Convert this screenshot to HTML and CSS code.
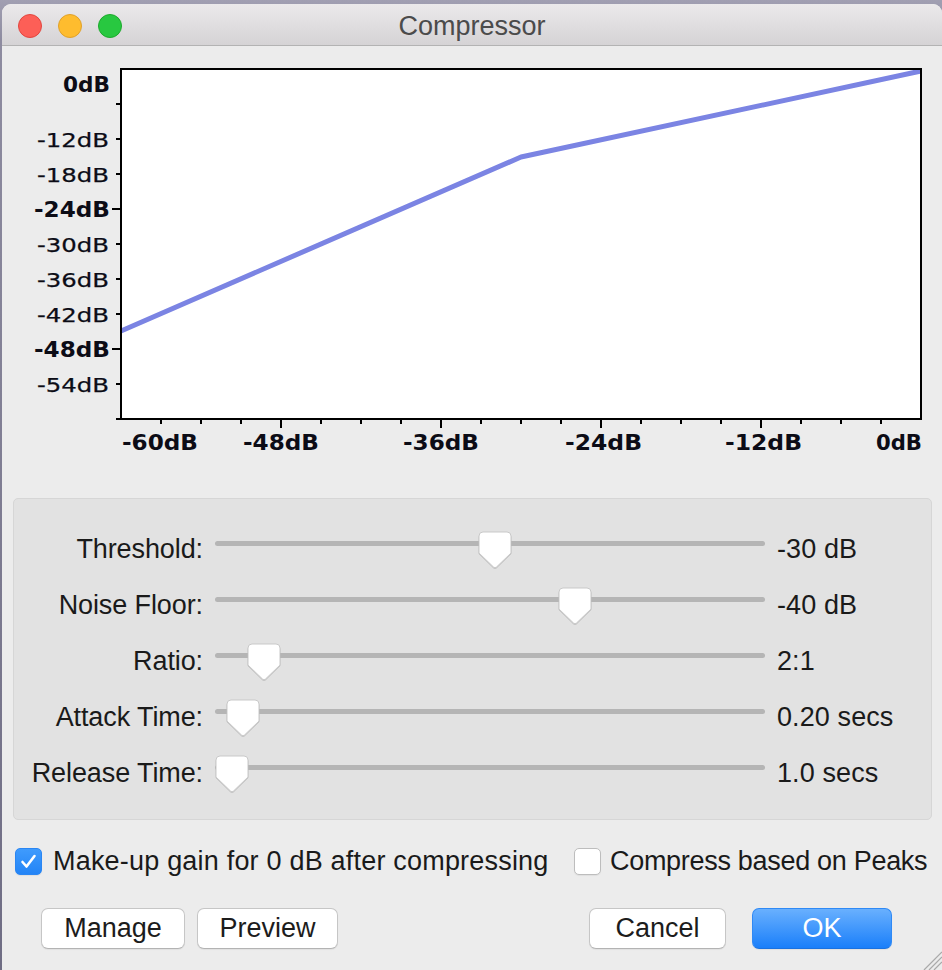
FILE: index.html
```html
<!DOCTYPE html>
<html>
<head>
<meta charset="utf-8">
<title>Compressor</title>
<link rel="stylesheet" href="styles.css">
</head>
<body>
<div class="window">
  <header class="titlebar">
    <div class="lights">
      <span class="light red"></span>
      <span class="light yellow"></span>
      <span class="light green"></span>
    </div>
    <div class="title">Compressor</div>
    <div></div>
  </header>

  <svg class="graph" width="940" height="420" viewBox="2 46 940 420">
    <rect x="121" y="69" width="800" height="350" fill="#ffffff"/>
    <polyline points="121,331 521,157 921,71" fill="none" stroke="#7b84e3" stroke-width="5" stroke-linejoin="round"/>
    <rect x="121" y="69" width="800" height="350" fill="none" stroke="#000" stroke-width="2"/>
    <g stroke="#000" stroke-width="2">
      <line x1="116" y1="104" x2="120" y2="104"/>
      <line x1="116" y1="139" x2="120" y2="139"/>
      <line x1="116" y1="174" x2="120" y2="174"/>
      <line x1="112" y1="209" x2="120" y2="209"/>
      <line x1="116" y1="244" x2="120" y2="244"/>
      <line x1="116" y1="279" x2="120" y2="279"/>
      <line x1="116" y1="314" x2="120" y2="314"/>
      <line x1="112" y1="349" x2="120" y2="349"/>
      <line x1="116" y1="384" x2="120" y2="384"/>
      <line x1="116" y1="419" x2="120" y2="419"/>
      <line x1="161" y1="420" x2="161" y2="424"/>
      <line x1="201" y1="420" x2="201" y2="424"/>
      <line x1="241" y1="420" x2="241" y2="424"/>
      <line x1="281" y1="420" x2="281" y2="428"/>
      <line x1="321" y1="420" x2="321" y2="424"/>
      <line x1="361" y1="420" x2="361" y2="424"/>
      <line x1="401" y1="420" x2="401" y2="424"/>
      <line x1="441" y1="420" x2="441" y2="428"/>
      <line x1="481" y1="420" x2="481" y2="424"/>
      <line x1="521" y1="420" x2="521" y2="424"/>
      <line x1="561" y1="420" x2="561" y2="424"/>
      <line x1="601" y1="420" x2="601" y2="428"/>
      <line x1="641" y1="420" x2="641" y2="424"/>
      <line x1="681" y1="420" x2="681" y2="424"/>
      <line x1="721" y1="420" x2="721" y2="424"/>
      <line x1="761" y1="420" x2="761" y2="428"/>
      <line x1="801" y1="420" x2="801" y2="424"/>
      <line x1="841" y1="420" x2="841" y2="424"/>
      <line x1="881" y1="420" x2="881" y2="424"/>
    </g>
    <g class="axis">
      <text class="major" x="63" y="92" textLength="47" lengthAdjust="spacingAndGlyphs">0dB</text>
      <text x="37" y="147" textLength="72" lengthAdjust="spacingAndGlyphs">-12dB</text>
      <text x="37" y="182" textLength="72" lengthAdjust="spacingAndGlyphs">-18dB</text>
      <text class="major" x="34" y="217" textLength="76" lengthAdjust="spacingAndGlyphs">-24dB</text>
      <text x="37" y="252" textLength="72" lengthAdjust="spacingAndGlyphs">-30dB</text>
      <text x="37" y="287" textLength="72" lengthAdjust="spacingAndGlyphs">-36dB</text>
      <text x="37" y="322" textLength="72" lengthAdjust="spacingAndGlyphs">-42dB</text>
      <text class="major" x="34" y="357" textLength="76" lengthAdjust="spacingAndGlyphs">-48dB</text>
      <text x="37" y="392" textLength="72" lengthAdjust="spacingAndGlyphs">-54dB</text>

      <text class="major" x="122" y="450" textLength="76" lengthAdjust="spacingAndGlyphs">-60dB</text>
      <text class="major" x="243" y="450" textLength="76" lengthAdjust="spacingAndGlyphs">-48dB</text>
      <text class="major" x="403" y="450" textLength="76" lengthAdjust="spacingAndGlyphs">-36dB</text>
      <text class="major" x="565" y="450" textLength="77" lengthAdjust="spacingAndGlyphs">-24dB</text>
      <text class="major" x="725" y="450" textLength="77" lengthAdjust="spacingAndGlyphs">-12dB</text>
      <text class="major" x="876" y="450" textLength="46" lengthAdjust="spacingAndGlyphs">0dB</text>
    </g>
  </svg>

  <section class="panel">
    <div class="row">
      <span class="label">Threshold:</span>
      <div class="track"><span class="thumb" style="--f:0.510"><svg width="34" height="38" viewBox="0 0 34 38"><path d="M5,1 H29 Q33,1 33,5 V22 L18.5,36 Q17,37.4 15.5,36 L1,22 V5 Q1,1 5,1 Z"/></svg></span></div>
      <span class="value">-30 dB</span>
    </div>
    <div class="row">
      <span class="label">Noise Floor:</span>
      <div class="track"><span class="thumb" style="--f:0.665"><svg width="34" height="38" viewBox="0 0 34 38"><path d="M5,1 H29 Q33,1 33,5 V22 L18.5,36 Q17,37.4 15.5,36 L1,22 V5 Q1,1 5,1 Z"/></svg></span></div>
      <span class="value">-40 dB</span>
    </div>
    <div class="row">
      <span class="label">Ratio:</span>
      <div class="track"><span class="thumb" style="--f:0.062"><svg width="34" height="38" viewBox="0 0 34 38"><path d="M5,1 H29 Q33,1 33,5 V22 L18.5,36 Q17,37.4 15.5,36 L1,22 V5 Q1,1 5,1 Z"/></svg></span></div>
      <span class="value">2:1</span>
    </div>
    <div class="row">
      <span class="label">Attack Time:</span>
      <div class="track"><span class="thumb" style="--f:0.021"><svg width="34" height="38" viewBox="0 0 34 38"><path d="M5,1 H29 Q33,1 33,5 V22 L18.5,36 Q17,37.4 15.5,36 L1,22 V5 Q1,1 5,1 Z"/></svg></span></div>
      <span class="value">0.20 secs</span>
    </div>
    <div class="row">
      <span class="label">Release Time:</span>
      <div class="track"><span class="thumb" style="--f:0"><svg width="34" height="38" viewBox="0 0 34 38"><path d="M5,1 H29 Q33,1 33,5 V22 L18.5,36 Q17,37.4 15.5,36 L1,22 V5 Q1,1 5,1 Z"/></svg></span></div>
      <span class="value">1.0 secs</span>
    </div>
  </section>

  <div class="checks">
    <label class="check">
      <span class="box checked"><svg width="27" height="27" viewBox="0 0 27 27"><path d="M7.5,14 L11.5,18.5 L19.5,8" fill="none" stroke="#fff" stroke-width="2.6" stroke-linecap="round" stroke-linejoin="round"/></svg></span>
      <span class="check-text">Make-up gain for 0 dB after compressing</span>
    </label>
    <label class="check">
      <span class="box"></span>
      <span class="check-text narrow">Compress based on Peaks</span>
    </label>
  </div>

  <div class="buttons">
    <button class="btn manage">Manage</button>
    <button class="btn preview">Preview</button>
    <span class="spacer"></span>
    <button class="btn cancel">Cancel</button>
    <button class="btn ok">OK</button>
  </div>

  <svg class="grip" width="22" height="22" viewBox="0 0 22 22">
    <g stroke="#a9a9a9" stroke-width="1.2">
      <line x1="4" y1="22" x2="22" y2="4"/>
      <line x1="9" y1="22" x2="22" y2="9"/>
      <line x1="14" y1="22" x2="22" y2="14"/>
    </g>
  </svg>
</div>
</body>
</html>
```

FILE: styles.css
```css
* {
  box-sizing: border-box;
}

html, body {
  margin: 0;
  padding: 0;
}

body {
  width: 942px;
  height: 970px;
  overflow: hidden;
  background: linear-gradient(#a19fb2 0, #8e8ca0 40px, #6f6d84 100%);
  font-family: "Liberation Sans", Arial, sans-serif;
}

.window {
  position: relative;
  margin: 4px 0 0 2px;
  width: 940px;
  height: 966px;
  background: #ececec;
  border-radius: 9px 9px 0 0;
  overflow: hidden;
  color: #1a1a1a;
  font-size: 27px;
}

.titlebar {
  height: 42px;
  padding-top: 3px;
  border-bottom: 1px solid #b3b3b3;
  background: linear-gradient(#ebe9eb, #d5d3d5);
  display: grid;
  grid-template-columns: 1fr auto 1fr;
  align-items: center;
}

.lights {
  display: flex;
  gap: 16px;
  padding-left: 16px;
}

.light {
  width: 24px;
  height: 24px;
  border-radius: 50%;
}

.red {
  background: #fd5f57;
  border: 1px solid #e2463f;
}

.yellow {
  background: #febc2e;
  border: 1px solid #e0a12a;
}

.green {
  background: #28c840;
  border: 1px solid #1daa2c;
}

.title {
  font-size: 27px;
  color: #4b4b4b;
}

.graph {
  display: block;
}

.axis text {
  font-family: "DejaVu Sans", Verdana, sans-serif;
  font-size: 19.5px;
  fill: #0c0c16;
  stroke: #0c0c16;
  stroke-width: 0.25px;
}

.axis text.major {
  font-size: 21px;
  font-weight: bold;
  stroke-width: 0;
}

.panel {
  margin: 32px 0 0 11px;
  width: 919px;
  height: 322px;
  padding-top: 22px;
  background: #e2e2e2;
  border: 1px solid #d6d6d6;
  border-radius: 5px;
}

.row {
  display: grid;
  grid-template-columns: 189px 550px auto;
  column-gap: 12px;
  align-items: center;
  height: 56px;
}

.label {
  text-align: right;
  letter-spacing: -0.1px;
}

.track {
  position: relative;
  height: 5px;
  margin-bottom: 12px;
  background: #b5b5b5;
  border-radius: 3px;
}

.thumb {
  position: absolute;
  top: -10px;
  left: calc(var(--f) * (100% - 34px));
  width: 34px;
  height: 38px;
}

.thumb svg {
  display: block;
  filter: drop-shadow(0 1px 0.5px rgba(0, 0, 0, 0.12));
}

.thumb path {
  fill: #ffffff;
  stroke: #c9c9c9;
  stroke-width: 1;
}

.value {
  letter-spacing: 0.1px;
}

.checks {
  display: grid;
  grid-template-columns: 559px auto;
  align-items: center;
  height: 42px;
  margin-top: 20px;
  padding-left: 13px;
}

.check {
  display: flex;
  align-items: center;
  gap: 11px;
}

.box {
  width: 27px;
  height: 27px;
  border-radius: 5px;
  background: #ffffff;
  border: 1px solid #bdbdbd;
  box-shadow: 0 1px 1px rgba(0, 0, 0, 0.06);
}

.box.checked {
  background: linear-gradient(#3f9bfd, #2384f6);
  border: 1px solid #2a86f3;
}

.box svg {
  display: block;
  margin: -1px;
}

.check-text {
  letter-spacing: 0.2px;
}

.check-text.narrow {
  letter-spacing: -0.3px;
  margin-left: -2px;
}

.buttons {
  display: flex;
  align-items: center;
  margin-top: 26px;
  padding-left: 39px;
}

.spacer {
  width: 251px;
}

.btn {
  height: 41px;
  padding: 0;
  font-family: "Liberation Sans", Arial, sans-serif;
  font-size: 27px;
  color: #1c1c1c;
  background: #ffffff;
  border: 1px solid #c6c6c6;
  border-bottom-color: #b3b3b3;
  border-radius: 7px;
  box-shadow: 0 1px 1px rgba(0, 0, 0, 0.05);
}

.manage {
  width: 144px;
}

.preview {
  width: 141px;
  margin-left: 12px;
}

.cancel {
  width: 137px;
}

.ok {
  width: 140px;
  margin-left: 26px;
  color: #ffffff;
  background: linear-gradient(#69b0fe, #1a7ffa);
  border: 1px solid #2f89f5;
  border-bottom-color: #1a72e0;
}

.grip {
  position: absolute;
  right: 0;
  bottom: 0;
}
```
